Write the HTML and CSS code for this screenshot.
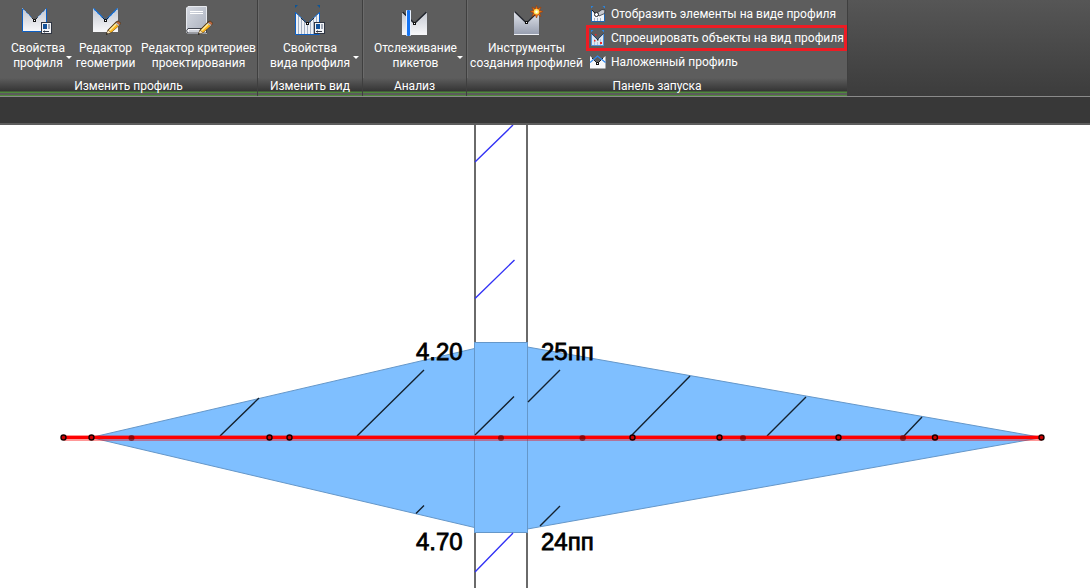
FILE: index.html
```html
<!DOCTYPE html>
<html lang="ru">
<head>
<meta charset="utf-8">
<title>Профиль</title>
<link rel="stylesheet" href="styles.css">
</head>
<body>
<svg class="defs" aria-hidden="true">
  <defs>
    <linearGradient id="paper" x1="0" y1="0" x2="0" y2="1"><stop offset="0" stop-color="#c3c7d0"/><stop offset="1" stop-color="#f8f8fa"/></linearGradient>
    <linearGradient id="steel" x1="0" y1="0" x2="0" y2="1"><stop offset="0" stop-color="#e4e7ee"/><stop offset="1" stop-color="#989fb0"/></linearGradient>
    <linearGradient id="book" x1="0" y1="0" x2="1" y2="1"><stop offset="0" stop-color="#d5d9e1"/><stop offset="1" stop-color="#a9afbc"/></linearGradient>
    <g id="badge">
      <rect x=".5" y=".5" width="10" height="11" fill="#f3f4f7" stroke="#303643"/>
      <rect x="2" y="2" width="4" height="5" fill="#15539a"/>
      <rect x="7" y="2" width="2" height="5" fill="#a1a8b5"/>
      <path d="M2 9.500h6M3.500 8.500v2" stroke="#303643"/>
    </g>
    <g id="pencil">
      <path d="M1 14.500L2.500 10 11 1.500 13 0.500 16 3 15 5 6 13Z" fill="#4c3312"/>
      <path d="M3.500 10.500L10.500 3.500 13.500 6 6 12.500Z" fill="#fbb51f"/>
      <path d="M4 10L10.500 3.500 11.700 4.500 5 11Z" fill="#fff0a0"/>
      <path d="M10.500 3.500L11.500 2.500 14.500 5 13.500 6Z" fill="#c3c6cc"/>
      <path d="M11.500 2.500L13 1.200 15.500 3.300 14.500 5Z" fill="#bd6840"/>
      <path d="M1.500 14L3 10.500 5.800 12.500Z" fill="#f4e1b7"/>
      <path d="M1 14.800L1.700 12.800 3 14Z" fill="#111"/>
    </g>
  </defs>
</svg>

<header class="ribbon">
  <section class="panel panel-profile">
    <div class="tools">
      <button class="tool tool-props"><svg class="icon" viewBox="0 0 36 32"><path d="M2.500 3.500L14.500 15.500 26.500 3.500V26.500H2.500Z" fill="url(#paper)"/><path d="M14.500 15.500L2.500 3.500V26.500H26.500V3.500Z" fill="none" stroke="#0c5fc4"/><path d="M2.500 3.500L14.500 15.500 26.500 3.500" fill="none" stroke="#d9ebff" stroke-dasharray="1 1"/><path d="M11.500 12.500l3 3 3-3" fill="none" stroke="#20242c"/><rect x="13.500" y="14.500" width="2" height="2" fill="#fff" stroke="#111"/><use href="#badge" x="21" y="17"/></svg><span>Свойства<br>профиля</span><i class="caret"></i></button>
      <button class="tool tool-geometry"><svg class="icon" viewBox="0 0 36 32"><path d="M5 3L17.500 15.500 30 3V27H5Z" fill="url(#paper)"/><path d="M5.500 3.500L17.500 15.500 29.500 3.500" fill="none" stroke="#1670d6" stroke-width="1.500"/><path d="M5.500 4.500L17.500 16.500 29.500 4.500" fill="none" stroke="#d9ebff" stroke-dasharray="1 1"/><path d="M14.500 12.500l3 3 3-3" fill="none" stroke="#20242c"/><rect x="16.500" y="14.500" width="2" height="2" fill="#fff" stroke="#111"/><use href="#pencil" x="17" y="15"/></svg><span>Редактор<br>геометрии</span></button>
      <button class="tool tool-criteria"><svg class="icon" viewBox="0 0 36 32"><path d="M7 1.500H25.500V28.500H7L5.500 27V3Z" fill="url(#book)" stroke="#e7e9ee"/><path d="M7 23.500H25.500V28H7Q4 26 7 23.500Z" fill="#f7f7f9" stroke="#40444e"/><path d="M8 26h15" stroke="#a9afbc"/><path d="M9 6.500h13M9 8.500h13" stroke="#fff"/><use href="#pencil" x="16" y="15"/></svg><span>Редактор критериев<br>проектирования</span></button>
    </div>
    <h2 class="title">Изменить профиль</h2>
  </section>

  <section class="panel panel-view">
    <div class="tools">
      <button class="tool"><svg class="icon" viewBox="0 0 36 32"><path d="M3.500 7.500L15.500 18.500 27.500 7.500V29.500H3.500Z" fill="#eef1f6"/><path d="M6.500 11V29M9.500 14V29M12.500 16V29M15.500 20V29M18.500 16V29M21.500 14V29M24.500 11V29" stroke="#a3afc1"/><path d="M3.500 7V29.500H27.500V7" fill="none" stroke="#0c5fc4"/><path d="M3.500 7.500L15.500 18.500 27.500 7.500" fill="none" stroke="#1670d6"/><path d="M9 13l6.500 6 6.500-6" fill="none" stroke="#20242c"/><rect x="14.500" y="17.500" width="2" height="2" fill="#fff" stroke="#111"/><path d="M3 3V0h3ZM28 3V0h-3Z" fill="#0c5598"/><use href="#badge" x="22" y="17"/></svg><span>Свойства<br>вида профиля</span><i class="caret"></i></button>
    </div>
    <h2 class="title">Изменить вид</h2>
  </section>

  <section class="panel panel-analysis">
    <div class="tools">
      <button class="tool"><svg class="icon" viewBox="0 0 36 32"><path d="M4 6.500L16.500 18.500 29 6.500V30H4Z" fill="url(#paper)"/><path d="M4.500 7L16.500 18.500 28.500 7" fill="none" stroke="#20242c" stroke-width="1.500"/><rect x="15.500" y="17.500" width="2" height="2" fill="#fff" stroke="#111"/><rect x="8" y="5" width="5" height="26" rx="1" fill="#e8f1ff"/><rect x="9" y="5" width="3" height="26" rx="1" fill="#1473f2"/></svg><span>Отслеживание<br>пикетов</span><i class="caret"></i></button>
    </div>
    <h2 class="title">Анализ</h2>
  </section>

  <section class="panel panel-launch">
    <div class="tools">
      <button class="tool tool-create"><svg class="icon" viewBox="0 0 36 32"><path d="M5 6L17.500 18 30 6V29H5Z" fill="url(#steel)"/><path d="M5 29.500H30" stroke="#eef0f4"/><path d="M5.500 6.500L17.500 18 29.500 6.500" fill="none" stroke="#24272f" stroke-width="1.300"/><rect x="16.500" y="16.500" width="2" height="2" fill="#fff" stroke="#111"/><path d="M27.500 .5L28.800 4 32 2 30.500 5.500 34 6.500 30.500 8 32 11.500 28.800 9.500 27.500 13 26.200 9.500 23 11.500 24.500 8 21 6.500 24.500 5.500 23 2 26.200 4Z" fill="#f47a12" stroke="#9c3c09" stroke-width=".6"/><circle cx="27.500" cy="6.700" r="2.600" fill="#ffeb66"/><circle cx="27.500" cy="6.700" r="1.200" fill="#fff"/></svg><span>Инструменты<br>создания профилей</span></button>
      <div class="list">
        <button class="row"><svg class="mini" viewBox="0 0 16 16"><path d="M1.500 4L5 8H12L14.500 6V15.500H1.500Z" fill="#f1f4f8"/><path d="M1.500 4V15.500H14.500V7" fill="none" stroke="#1a65b4"/><path d="M4.500 12v3M7.500 12v3M10.500 12v3" stroke="#a3b3c8"/><path d="M1 2.500V0h2.500ZM15 2.500V0h-2.500Z" fill="#2a83dd"/><path d="M2 4l3 3" stroke="#222"/><path d="M7 7L12 3.500 15 4 14.500 7.500 9 10Z" fill="#c6cad1" stroke="#30343a" stroke-width=".8"/><circle cx="6.500" cy="8.500" r="2" fill="#fff" stroke="#20242c"/></svg>Отобразить элементы на виде профиля</button>
        <button class="row row-marked"><svg class="mini" viewBox="0 0 16 16"><path d="M1.500 4L7.500 10 13.500 4V15.500H1.500Z" fill="#dfe7f1"/><path d="M4.500 9v6M7.500 12v3M10.500 9v6" stroke="#b3c2d6"/><path d="M1.500 4V15.500H13.500V4" fill="none" stroke="#4e91dc"/><path d="M1.500 3.500L7.500 9.500 13.500 3.500" fill="none" stroke="#24456f"/><path d="M1 2.500V0h2.500ZM14 2.500V0h-2.500Z" fill="#2a83dd"/><path d="M5 4h1.500v1.500h-1.500zM4 10h1.500v1.500h-1.500zM10 12h2v2h-2z" fill="#ee2727"/><path d="M7 9h1.500v1.500h-1.500z" fill="#222"/></svg>Спроецировать объекты на вид профиля</button>
        <button class="row"><svg class="mini" viewBox="0 0 16 16"><path d="M0 2L7.500 9 15.500 2V14.500H0Z" fill="#f6f7f9"/><path d="M2 4l5.500 5.500L13 4" fill="none" stroke="#202329"/><path d="M0 8.500L7.500 2 15.500 8.500" fill="none" stroke="#2f87ed" stroke-width="1.200"/><rect x="6.500" y="8.500" width="2" height="2" fill="#fff" stroke="#111"/></svg>Наложенный профиль</button>
      </div>
    </div>
    <h2 class="title">Панель запуска</h2>
  </section>
</header>
<div class="filebar"></div>

<main class="canvas">
  <svg class="drawing" viewBox="0 125 1090 463">
    <g class="section-fill">
      <path d="M91 437.500L474.500 348.500V527.500Z"/>
      <path d="M527.500 347L1042 437.500 527.500 529Z"/>
      <rect x="474.500" y="342.500" width="53" height="190"/>
    </g>
    <path class="border" d="M475 125V342M475 533V588M527 125V342M527 533V588"/>
    <path class="hatch-blue" d="M475 162L513 125M475 298.500L514.500 260M475 572L513 533"/>
    <path class="hatch" d="M220 436L259 398M357 436L424 370M475 435L514 396.500M528 402L560 370M416 513.500L424 505.500M540 526L560 506M632 435L690 376M767 436L806 397M904 436L922 417"/>
    <g class="labels">
      <text x="416" y="360">4.20</text>
      <text x="541" y="360">25пп</text>
      <text x="416" y="550">4.70</text>
      <text x="541" y="550">24пп</text>
    </g>
    <path class="axis-shadow" d="M64 438H1042"/>
    <path class="axis" d="M64 437.500H1042"/>
    <g class="faint">
      <circle cx="131.500" cy="438" r="3"/><circle cx="501" cy="438" r="3"/><circle cx="582.500" cy="438" r="3"/><circle cx="743" cy="438" r="3"/><circle cx="903" cy="438" r="3"/>
    </g>
    <g class="nodes">
      <circle cx="63.500" cy="437.500" r="2.500"/><circle cx="91.500" cy="437.500" r="2.500"/><circle cx="269.500" cy="437.500" r="2.500"/><circle cx="289.500" cy="437.500" r="2.500"/><circle cx="632.500" cy="437.500" r="2.500"/><circle cx="719.500" cy="437.500" r="2.500"/><circle cx="838.500" cy="437.500" r="2.500"/><circle cx="935" cy="437.500" r="2.500"/><circle cx="1041.500" cy="437.500" r="2.500"/>
    </g>
  </svg>
</main>
</body>
</html>
```
FILE: styles.css
```css
* { box-sizing: border-box; }
body {
  margin: 0;
  background: #fff;
  color: #fff;
  font: 12px/15px Roboto, "Noto Sans", sans-serif;
}
.defs { position: absolute; width: 0; height: 0; }
.ribbon {
  display: flex;
  background: linear-gradient(#565656, #3c3c3c);
  border-bottom: 1px solid #8a8a8a;
}
.panel {
  display: flex;
  flex: none;
  flex-direction: column;
  background: #5d5d5d;
  border-right: 1px solid #3f3f3f;
}
.panel + .panel { box-shadow: inset 1px 0 #6b6b6b; }
.panel-profile { width: 258px; }
.panel-view { width: 105px; }
.panel-analysis { width: 104px; }
.panel-launch { width: 381px; }
.tools {
  display: flex;
  height: 78px;
  padding-top: 4px;
}
.panel-profile .tools { padding-left: 6px; }
.panel-analysis .tools { padding-left: 2px; }
button {
  padding: 0;
  border: 0;
  background: none;
  color: inherit;
  font: inherit;
  white-space: nowrap;
}
.tool {
  position: relative;
  display: flex;
  flex: 1;
  flex-direction: column;
  align-items: center;
  gap: 4px;
  padding-top: 1px;
}
.tool-props { flex: 0 0 64px; }
.tool-geometry { flex: 0 0 71px; }
.tool-criteria { flex: 0 0 115px; }
.tool-create { flex: 0 0 119px; }
.icon { flex: none; width: 36px; height: 32px; }
.caret {
  position: absolute;
  top: 52px;
  right: 3px;
  border: 3px solid transparent;
  border-top-color: #fff;
  border-bottom: 0;
}
.tool-props .caret { right: -2px; }
.list {
  display: flex;
  flex-direction: column;
  gap: 4px;
  width: 255px;
  margin-left: 3px;
}
.row {
  display: flex;
  align-items: center;
  gap: 5px;
  height: 20px;
  padding-left: 1px;
}
.row-marked { outline: 3px solid #ed1c24; }
.mini { flex: none; width: 16px; height: 16px; }
.title {
  height: 18px;
  margin: 0;
  background: linear-gradient(#5d5d5d, #353535 13px, #4f8a3c 14px, #4f8a3c 15px, #5b5b5b 15px, #5b5b5b 17px, #4f8a3c 17px);
  font: inherit;
  line-height: 17px;
  text-align: center;
}
.filebar {
  height: 28px;
  background: #383838;
  border-bottom: 2px solid #5d5d5d;
}
.drawing { display: block; width: 100%; height: auto; }
.section-fill { fill: #7fbfff; stroke: #6597c9; stroke-width: 1; }
.border { stroke: #6a6a6a; stroke-width: 2; }
.hatch { stroke: #14212e; stroke-width: 1.4px; }
.hatch-blue { stroke: #3333f5; stroke-width: 1.4px; }
.labels {
  fill: #000;
  stroke: #000;
  stroke-width: 0.8px;
  font: 24px "Liberation Sans", Arial, sans-serif;
}
.axis { stroke: #f00; stroke-width: 3px; }
.axis-shadow { stroke: #f00; stroke-width: 6px; opacity: .4; }
.faint { fill: #500; opacity: .6; }
.nodes { fill: #c00; stroke: #1a0000; stroke-width: 1.4px; }
```
